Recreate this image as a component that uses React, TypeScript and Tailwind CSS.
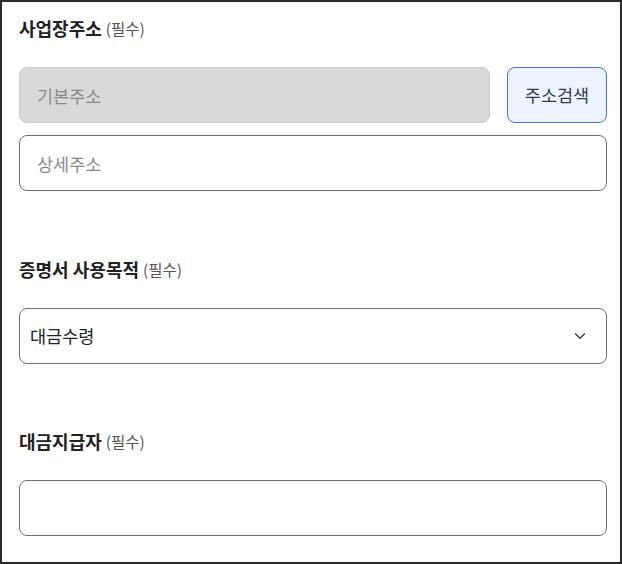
import { ChevronDown } from "lucide-react";

const font = { fontFamily: '"Noto Sans CJK KR", "Noto Sans", sans-serif' };

const Label = ({ title }: { title: string }) => (
  <p className="h-6 flex items-center gap-1 text-[18px] leading-6 font-bold text-[#222]">
    {title}
    <span className="text-[15.5px] font-normal text-[#555]">(필수)</span>
  </p>
);

export default function App() {
  return (
    <div style={font} className="w-[622px] h-[564px] border-2 border-[#2a2a2a] bg-white pl-[17px] pr-[13px] pt-[14px]">
      <section>
        <Label title="사업장주소" />
        <div className="mt-[27px] flex gap-[17px]">
          <input
            disabled
            placeholder="기본주소"
            className="h-14 flex-1 rounded-lg border border-[#cbcbcb] bg-[#d9d9d9] px-[17px] text-[17.5px] placeholder:text-[#8a8a8a]"
          />
          <button
            type="button"
            className="h-14 w-[100px] rounded-lg border border-[#3a78e0] bg-[#eef4ff] text-[17.5px] text-[#2f3a52]"
          >
            주소검색
          </button>
        </div>
        <input
          placeholder="상세주소"
          className="mt-3 block h-14 w-full rounded-lg border border-[#6f6f6f] px-[17px] text-[17.5px] placeholder:text-[#8a8a8a]"
        />
      </section>

      <section className="mt-[66px]">
        <Label title="증명서 사용목적" />
        <div className="mt-[27px] flex h-14 items-center justify-between rounded-lg border border-[#6f6f6f] pl-[10px] pr-[17px]">
          <span className="text-[17.5px] text-[#222]">대금수령</span>
          <ChevronDown size={18} strokeWidth={1.6} className="text-[#333]" />
        </div>
      </section>

      <section className="mt-[65px]">
        <Label title="대금지급자" />
        <input className="mt-[27px] block h-14 w-full rounded-lg border border-[#6f6f6f] px-[17px] text-[17.5px]" />
      </section>
    </div>
  );
}
